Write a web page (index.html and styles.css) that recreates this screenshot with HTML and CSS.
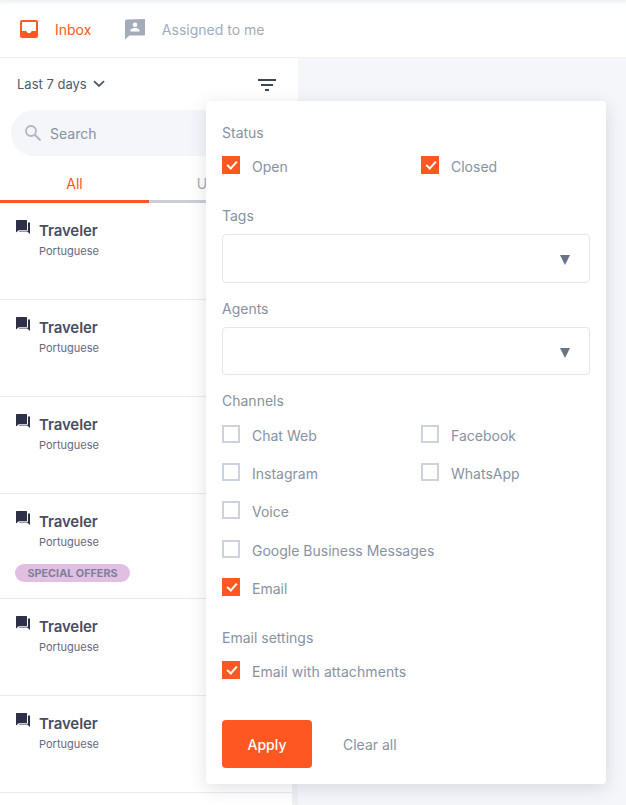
FILE: index.html
```html
<!DOCTYPE html>
<html lang="en">
<head>
<meta charset="utf-8">
<title>Inbox</title>
<link rel="stylesheet" href="styles.css">
</head>
<body>
<div class="app">
  <header class="topbar">
    <a class="nav nav-active">
      <svg class="nav-icon" width="20" height="20" viewBox="0 0 20 20"><path fill="#ff5722" d="M3 1h14a2 2 0 0 1 2 2v14a2 2 0 0 1-2 2H3a2 2 0 0 1-2-2V3a2 2 0 0 1 2-2zm0 2v9h4.200a2.900 2.900 0 0 0 5.600 0H17V3z"/></svg>
      <span>Inbox</span>
    </a>
    <a class="nav nav-assigned">
      <svg class="nav-icon" width="22" height="22" viewBox="0 0 22 22"><path fill="#a3acb9" fill-rule="evenodd" d="M3 1.500 21 1v15.500a1 1 0 0 1-1 1H5.500L1 21.500V3.500a2 2 0 0 1 2-2zM11 4.500a2.300 2.300 0 1 0 0 4.600 2.300 2.300 0 0 0 0-4.600zM6.500 13.500h9v-1.200c0-1.500-3-2.300-4.500-2.300s-4.500.8-4.500 2.300z"/></svg>
      <span>Assigned to me</span>
    </a>
  </header>
  <div class="body">
    <aside class="side">
      <div class="side-main">
        <div class="range-row">
          <span class="range">Last 7 days
            <svg width="12" height="8" viewBox="0 0 12 8"><path d="M1 1.200 6 6l5-4.800" fill="none" stroke="#4f5b6b" stroke-width="1.800"/></svg>
          </span>
          <svg class="filter" width="18" height="12" viewBox="0 0 18 12"><path fill="#3c4654" d="M0 0h18v2H0zM3 5h12v2H3zM7 10h4v2H7z"/></svg>
        </div>
        <div class="search">
          <svg width="18" height="18" viewBox="0 0 18 18"><circle cx="7" cy="7" r="5" fill="none" stroke="#b0b5c0" stroke-width="1.800"/><path d="m11 11 5.500 5.500" stroke="#b0b5c0" stroke-width="2"/></svg>
          <span>Search</span>
        </div>
        <div class="tabs">
          <div class="tab tab-active">All</div>
          <div class="tab">Unread</div>
        </div>
        <ul class="list">
          <li class="item"><svg class="chat" width="14" height="14" viewBox="0 0 14 14"><path fill="#2d3148" d="M.6 0h9.800a.6.6 0 0 1 .6.600v8.800a.6.6 0 0 1-.6.600H3L0 12.500V.6A.6.6 0 0 1 .6 0zM12 2.500h2V14l-2.800-2.500H3V10.700h9z"/></svg><div><div class="name">Traveler</div><div class="lang">Portuguese</div></div></li>
          <li class="item"><svg class="chat" width="14" height="14" viewBox="0 0 14 14"><path fill="#2d3148" d="M.6 0h9.800a.6.6 0 0 1 .6.600v8.800a.6.6 0 0 1-.6.600H3L0 12.500V.6A.6.6 0 0 1 .6 0zM12 2.500h2V14l-2.800-2.500H3V10.700h9z"/></svg><div><div class="name">Traveler</div><div class="lang">Portuguese</div></div></li>
          <li class="item"><svg class="chat" width="14" height="14" viewBox="0 0 14 14"><path fill="#2d3148" d="M.6 0h9.800a.6.6 0 0 1 .6.600v8.800a.6.6 0 0 1-.6.600H3L0 12.500V.6A.6.6 0 0 1 .6 0zM12 2.500h2V14l-2.800-2.500H3V10.700h9z"/></svg><div><div class="name">Traveler</div><div class="lang">Portuguese</div></div></li>
          <li class="item item-tagged"><svg class="chat" width="14" height="14" viewBox="0 0 14 14"><path fill="#2d3148" d="M.6 0h9.800a.6.6 0 0 1 .6.600v8.800a.6.6 0 0 1-.6.600H3L0 12.500V.6A.6.6 0 0 1 .6 0zM12 2.500h2V14l-2.800-2.500H3V10.700h9z"/></svg><div><div class="name">Traveler</div><div class="lang">Portuguese</div></div><span class="tag">SPECIAL OFFERS</span></li>
          <li class="item"><svg class="chat" width="14" height="14" viewBox="0 0 14 14"><path fill="#2d3148" d="M.6 0h9.800a.6.6 0 0 1 .6.600v8.800a.6.6 0 0 1-.6.600H3L0 12.500V.6A.6.6 0 0 1 .6 0zM12 2.500h2V14l-2.800-2.500H3V10.700h9z"/></svg><div><div class="name">Traveler</div><div class="lang">Portuguese</div></div></li>
          <li class="item"><svg class="chat" width="14" height="14" viewBox="0 0 14 14"><path fill="#2d3148" d="M.6 0h9.800a.6.6 0 0 1 .6.600v8.800a.6.6 0 0 1-.6.600H3L0 12.500V.6A.6.6 0 0 1 .6 0zM12 2.500h2V14l-2.800-2.500H3V10.700h9z"/></svg><div><div class="name">Traveler</div><div class="lang">Portuguese</div></div></li>
        </ul>
      </div>
    </aside>
    <main class="content"></main>
  </div>

  <section class="popover">
    <h3 class="label label-status">Status</h3>
    <div class="checks">
      <label class="check"><span class="box box-on"></span>Open</label>
      <label class="check"><span class="box box-on"></span>Closed</label>
    </div>
    <h3 class="label label-tags">Tags</h3>
    <div class="select"><span class="arrow"></span></div>
    <h3 class="label label-agents">Agents</h3>
    <div class="select select-short"><span class="arrow"></span></div>
    <h3 class="label label-channels">Channels</h3>
    <div class="checks channels">
      <label class="check"><span class="box"></span>Chat Web</label>
      <label class="check"><span class="box"></span>Facebook</label>
      <label class="check"><span class="box"></span>Instagram</label>
      <label class="check"><span class="box"></span>WhatsApp</label>
      <label class="check wide"><span class="box"></span>Voice</label>
      <label class="check wide"><span class="box"></span>Google Business Messages</label>
      <label class="check wide"><span class="box box-on"></span>Email</label>
    </div>
    <h3 class="label label-settings">Email settings</h3>
    <label class="check attach"><span class="box box-on"></span>Email with attachments</label>
    <div class="actions">
      <button class="apply">Apply</button>
      <button class="clear">Clear all</button>
    </div>
  </section>
</div>
</body>
</html>
```
FILE: styles.css
```css
* { box-sizing: border-box; }
html, body { margin: 0; height: 100%; }
body { font-family: Inter, "Liberation Sans", sans-serif; font-size: 14px; color: #8792a2; background: #f4f6fa; overflow: hidden; }
.app { position: relative; width: 626px; height: 805px; display: flex; flex-direction: column; overflow: hidden; }

.topbar { height: 58px; flex: none; display: flex; align-items: center; padding: 1px 0 0 19px; background: #fff; border-bottom: 1px solid #eef0f4; box-shadow: inset 0 5px 4px -3px #eceef2; }
.nav { display: flex; align-items: center; color: #a3acb9; }
.nav-icon { display: block; flex: none; }
.nav-active { color: #ff5722; margin-right: 33px; }
.nav-active .nav-icon { margin-right: 16px; }
.nav-assigned .nav-icon { margin-right: 15.500px; }

.body { flex: 1; display: flex; min-height: 0; }
.side { width: 298px; flex: none; background: #fff; }
.content { flex: 1; }

.range-row { display: flex; align-items: center; justify-content: space-between; height: 52px; padding: 0 17px; width: 293px; }
.range { display: flex; align-items: center; gap: 6px; font-size: 13px; color: #4f5b6b; }
.filter { display: block; margin-top: 2px; }
.search { margin: 0 10px 0 11px; height: 46px; border-radius: 23px; background: #f4f6fa; display: flex; align-items: center; gap: 8px; padding-left: 13px; color: #8792a2; }
.search svg { display: block; flex: none; }
.tabs { display: flex; margin-top: 12px; width: 293px; height: 35px; }
.tab { flex: none; width: 144px; text-align: center; padding-top: 7px; border-bottom: 3px solid #c9ced6; color: #a3acb9; }
.tab-active { width: 149px; color: #ff5722; border-bottom-color: #ff5722; }
.list { list-style: none; margin: 0; padding: 0; width: 298px; border-right: 6px solid #eef0f5; height: 602px; }
.item { position: relative; height: 97px; display: flex; align-items: flex-start; padding: 17px 0 0 16px; border-bottom: 1px solid #e9ebf0; }
.item-tagged { height: 105px; }
.chat { display: block; flex: none; margin-right: 9px; }
.name { font-size: 15px; font-weight: 600; line-height: 18px; color: #4a4d60; margin-top: 2px; letter-spacing: -.1px; }
.lang { font-size: 11px; line-height: 14px; margin-top: 4px; color: #65697c; }
.tag { position: absolute; left: 15px; top: 70px; height: 18px; padding: 0 12.500px; border-radius: 9px; background: #e0bfe3; color: #7d8195; font-size: 10.800px; font-weight: 700; line-height: 19px; }

.popover { position: absolute; left: 206px; top: 101px; width: 400px; height: 683px; padding: 0 16px; background: #fff; border-radius: 4px; box-shadow: 0 4px 18px rgba(60, 66, 87, .16); }
.label { margin: 0; font-size: 14px; font-weight: 400; line-height: 18px; color: #8792a2; }
.label-status { margin-top: 23px; }
.label-tags { margin-top: 33px; }
.label-agents { margin-top: 17px; }
.label-channels { margin-top: 17px; }
.label-settings { margin-top: 33px; }
.checks { display: grid; grid-template-columns: 199px 1fr; margin-top: 14px; }
.check { display: flex; align-items: flex-start; height: 18px; line-height: 21px; color: #8792a2; }
.box { width: 18px; height: 18px; flex: none; margin-right: 12px; border: 2px solid #cdd3dc; position: relative; }
.box-on { background: #ff5722; border: none; }
.box-on::after { content: ""; position: absolute; left: 6.500px; top: 3px; width: 4px; height: 8px; border: solid #fff; border-width: 0 2.500px 2.500px 0; transform: rotate(42deg); }
.channels { margin-top: 15px; row-gap: 20.200px; }
.wide { grid-column: 1 / -1; }
.select { position: relative; height: 49px; margin-top: 9px; border: 1px solid #e1e7ea; border-radius: 4px; background: #fff; }
.select-short { height: 48px; }
.arrow { position: absolute; right: 19px; top: 20px; width: 0; height: 0; border-left: 5.500px solid transparent; border-right: 5.500px solid transparent; border-top: 10px solid #697386; }
.attach { margin-top: 14px; letter-spacing: .09px; }
.actions { display: flex; align-items: center; margin-top: 41px; }
.apply { width: 90px; height: 48px; padding: 2px 0 0; border: 0; border-radius: 4px; background: #ff5722; color: #fff; font: 500 14px Inter, "Liberation Sans", sans-serif; }
.clear { margin-left: 31px; padding: 2px 0 0; border: 0; background: none; color: #8792a2; font: 400 14px Inter, "Liberation Sans", sans-serif; }
```
